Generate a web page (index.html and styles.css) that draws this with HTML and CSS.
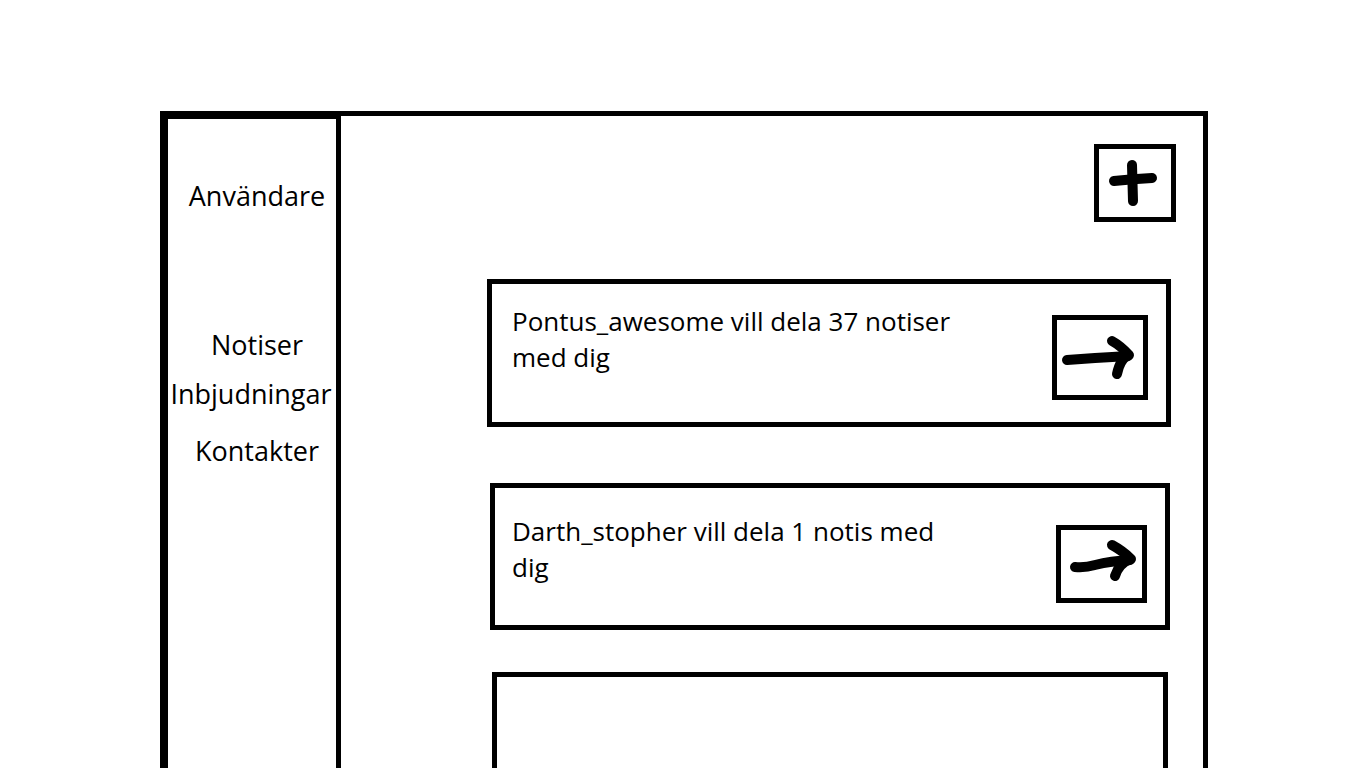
FILE: index.html
```html
<!DOCTYPE html>
<html lang="sv">
<head>
  <meta charset="UTF-8">
  <title>Notiser</title>
  <link rel="stylesheet" href="styles.css">
</head>
<body>

<div class="ram">
  <!-- Sidomeny -->
  <nav class="meny">
    <div class="meny-rubrik">Användare</div>
    <ul class="meny-lista">
      <li class="meny-notiser">Notiser</li>
      <li class="meny-inbjudningar">Inbjudningar</li>
      <li class="meny-kontakter">Kontakter</li>
    </ul>
  </nav>

  <main class="innehall">
    <div class="verktyg">
      <button class="knapp-ny" aria-label="Ny">
        <svg width="72" height="68" viewBox="0 0 72 68">
          <path d="M33 16 Q33.5 34 34 52" />
          <path d="M15 32 Q34 30 53 29" />
        </svg>
      </button>
    </div>

    <div class="notis notis-forsta">
      <p class="notis-text">Pontus_awesome vill dela 37 notiser med dig</p>
      <button class="knapp-pil stor" aria-label="Öppna">
        <svg width="86" height="75" viewBox="0 0 86 75">
          <path d="M10 40 Q24 39 38 38 Q56 37 71 36" />
          <path d="M55 21 Q64 26 72 35 Q63 39 60 54" />
        </svg>
      </button>
    </div>

    <div class="notis notis-andra">
      <p class="notis-text">Darth_stopher vill dela 1 notis med dig</p>
      <button class="knapp-pil liten" aria-label="Öppna">
        <svg width="81" height="68" viewBox="0 0 81 68">
          <path d="M14 37 Q24 38 34 35 Q50 31 69 30" />
          <path d="M51 15 Q62 21 70 29 Q58 33 54 46" />
        </svg>
      </button>
    </div>

    <div class="notis notis-tom"></div>
  </main>
</div>

</body>
</html>
```

FILE: styles.css
```css
body {
  margin: 0;
  height: 768px;
  overflow: hidden;
  background: #fff;
  color: #000;
  font-family: 'Open Sans', 'Liberation Sans', sans-serif;
}

.ram {
  display: flex;
  box-sizing: border-box;
  width: 1048px;
  height: 720px;
  margin: 111px 0 0 160px;
  border: 5px solid #000;
  border-bottom: none;
}

/* Sidomeny */
.meny {
  box-sizing: border-box;
  width: 176px;
  border-left: 3px solid #000;
  border-top: 3px solid #000;
  border-right: 5px solid #000;
  text-align: center;
  font-size: 27px;
  padding-left: 10px;
}

.meny-rubrik {
  margin-top: 59px;
  line-height: 36px;
}

.meny-lista {
  list-style: none;
  margin: 113px 0 0;
  padding: 0;
}

.meny-lista li {
  line-height: 36px;
}

.meny-inbjudningar {
  margin-top: 13px;
  margin-left: -12px;
}

.meny-kontakter {
  margin-top: 21px;
}

/* Innehåll */
.innehall {
  flex: 1;
}

.verktyg {
  display: flex;
  justify-content: flex-end;
  padding: 28px 27px 0 0;
}

button {
  background: #fff;
  padding: 0;
  cursor: pointer;
  border: 5px solid #000;
  display: block;
}

button svg {
  display: block;
}

button path {
  fill: none;
  stroke: #000;
  stroke-width: 10;
  stroke-linecap: round;
  stroke-linejoin: round;
}

.knapp-ny {
  width: 82px;
  height: 78px;
}

.notis {
  box-sizing: border-box;
  display: flex;
  align-items: flex-end;
  justify-content: space-between;
  height: 147px;
  margin: 56px 33px 0 149px;
  padding: 19px 18px 22px 17px;
  border: 5px solid #000;
}

.notis-forsta {
  margin: 57px 32px 0 146px;
  height: 148px;
  padding-left: 20px;
}

.notis-andra {
  padding-top: 25px;
}

.notis-tom {
  margin-top: 42px;
  height: 200px;
  margin-left: 151px;
  margin-right: 35px;
}

.notis-text {
  align-self: flex-start;
  width: 458px;
  margin: 0;
  font-size: 26px;
  line-height: 36px;
}

.knapp-pil.stor {
  width: 96px;
  height: 85px;
}

.knapp-pil.liten {
  width: 91px;
  height: 78px;
}
```
